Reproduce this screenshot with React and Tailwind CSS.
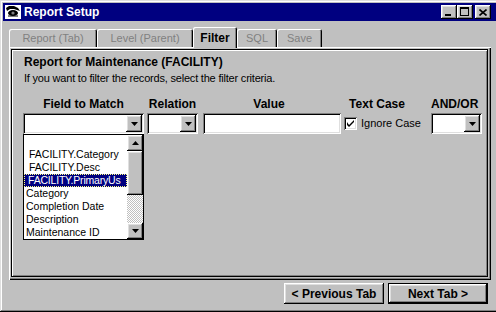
import React from 'react';

const font = { fontFamily: '"Liberation Sans", Arial, sans-serif' };

// win95 bevels
const raisedBtn = "shadow-[inset_-1px_-1px_0_#000,inset_1px_1px_0_#fff,inset_-2px_-2px_0_#808080,inset_2px_2px_0_#dfdfdf]";
const sunken = "shadow-[inset_1px_1px_0_#808080,inset_-1px_-1px_0_#fff,inset_2px_2px_0_#000,inset_-2px_-2px_0_#dfdfdf]";

function DownArrow() {
    return (
        <svg width="7" height="4" viewBox="0 0 7 4">
            <polygon points="0,0 7,0 3.5,4" fill="#000" />
        </svg>
    );
}

function UpArrow() {
    return (
        <svg width="7" height="4" viewBox="0 0 7 4">
            <polygon points="3.5,0 7,4 0,4" fill="#000" />
        </svg>
    );
}

function Combo({ width, children }) {
    return (
        <div className={`relative flex h-[21px] bg-white p-[2px] ${sunken}`} style={{ width }}>
            <div className="flex-1" />
            <div className={`flex h-[17px] w-[16px] items-center justify-center bg-[#c0c0c0] ${raisedBtn}`}>
                <DownArrow />
            </div>
            {children}
        </div>
    );
}

function Tab({ label, width, selected }) {
    if (selected) {
        return (
            <div
                className="relative z-10 -mb-px flex h-[21px] justify-center rounded-t-[2px] bg-[#c0c0c0] pt-[4px] text-[12px] font-bold leading-[14px] text-black shadow-[inset_1px_1px_0_#fff,inset_-1px_0_0_#000,inset_-2px_0_0_#808080]"
                style={{ width }}
            >
                {label}
            </div>
        );
    }
    return (
        <div
            className="flex h-[18px] items-center justify-center rounded-t-[2px] text-[11px] leading-[13px] text-[#808080] shadow-[inset_1px_1px_0_#fff,inset_-1px_0_0_#000,inset_-2px_0_0_#808080]"
            style={{ width }}
        >
            {label}
        </div>
    );
}

const listItems = [
    { text: '', indent: false },
    { text: 'FACILITY.Category', indent: true },
    { text: 'FACILITY.Desc', indent: true },
    { text: 'FACILITY.PrimaryUs', indent: true, selected: true },
    { text: 'Category' },
    { text: 'Completion Date' },
    { text: 'Description' },
    { text: 'Maintenance ID' },
];

export default function App() {
    return (
        <div className="h-[312px] w-[496px] overflow-hidden bg-[#c0c0c0]" style={font}>
            <div className="flex h-[312px] w-[499px] flex-col p-[3px] shadow-[inset_-1px_-1px_0_#000,inset_1px_1px_0_#dfdfdf,inset_-2px_-2px_0_#808080,inset_2px_2px_0_#fff]">
                {/* Title bar */}
                <div className="flex h-[18px] items-center bg-[#000080]">
                    <svg width="16" height="16" viewBox="0 0 16 16" className="ml-[2px]">
                        <rect x="0" y="1" width="16" height="14" fill="#fff" />
                        <path d="M1 4 L4 2 L9 2 L13 4 L15 7 L12 6 L9 5 L5 5 L2 7 Z" fill="#000" />
                        <ellipse cx="8" cy="9" rx="5" ry="3" fill="#000" />
                        <circle cx="8" cy="9" r="1.6" fill="#808080" />
                        <path d="M3 12 L13 12" stroke="#000" strokeWidth="1" />
                    </svg>
                    <span className="ml-[3px] text-[12px] font-bold leading-[14px] text-white">Report Setup</span>
                    <div className="flex-1" />
                    <div className={`relative h-[14px] w-[16px] bg-[#c0c0c0] ${raisedBtn}`}>
                        <div className="absolute left-[4px] top-[9px] h-[2px] w-[6px] bg-black" />
                    </div>
                    <div className={`relative h-[14px] w-[16px] bg-[#c0c0c0] ${raisedBtn}`}>
                        <div className="absolute left-[3px] top-[2px] h-[9px] w-[9px] border border-t-2 border-black" />
                    </div>
                    <div className={`ml-[2px] mr-[5px] flex h-[14px] w-[16px] items-center justify-center bg-[#c0c0c0] ${raisedBtn}`}>
                        <svg width="8" height="7" viewBox="0 0 8 7">
                            <path d="M0.5 0.5 L7.5 6.5 M7.5 0.5 L0.5 6.5" stroke="#000" strokeWidth="1.6" />
                        </svg>
                    </div>
                </div>

                {/* Tabs */}
                <div className="ml-[6px] mt-[6px] flex h-[20px] items-end">
                    <Tab label="Report (Tab)" width={88} />
                    <Tab label="Level (Parent)" width={96} />
                    <Tab label="Filter" width={44} selected />
                    <Tab label="SQL" width={40} />
                    <Tab label="Save" width={45} />
                </div>

                {/* Tab panel */}
                <div className="ml-[6px] h-[233px] w-[482px] pb-[3px] pl-[2px] pr-[3px] pt-[2px] shadow-[inset_1px_1px_0_#fff,inset_-1px_-1px_0_#000,inset_-2px_-2px_0_#808080]">
                    <div className="h-[228px] w-[477px] border border-black pl-[11px] pt-[5px] shadow-[inset_1px_1px_0_#fff,inset_-1px_-1px_0_#808080]">
                        <div className="pl-[1px] text-[12px] font-bold leading-[14px] text-black">
                            Report for Maintenance (FACILITY)
                        </div>
                        <div className="mt-[3px] pl-[1px] text-[11px] leading-[13px] tracking-[-0.2px] text-black">
                            If you want to filter the records, select the filter criteria.
                        </div>

                        {/* Column headers */}
                        <div className="mt-[12px] flex text-[12px] font-bold leading-[14px] text-black">
                            <div className="w-[121px] text-center">Field to Match</div>
                            <div className="ml-[3px] w-[51px] text-center">Relation</div>
                            <div className="ml-[5px] w-[138px] pr-[6px] text-center">Value</div>
                            <div className="ml-[3px] w-[87px]">
                                <div className="w-[66px] text-center">Text Case</div>
                            </div>
                            <div className="w-[51px] pr-[6px] text-center">AND/OR</div>
                        </div>

                        {/* Controls */}
                        <div className="mt-[2px] flex">
                            <Combo width={121}>
                                <div className="absolute left-0 top-[21px] z-20 flex h-[106px] w-[121px] border border-black bg-white">
                                    <div className="flex-1 overflow-hidden">
                                        {listItems.map((it, i) => (
                                            <div
                                                key={i}
                                                className={
                                                    it.selected
                                                        ? 'h-[13px] overflow-hidden whitespace-nowrap border border-dotted border-[#ffff80] bg-[#000080] pl-[3px] text-[10.5px] leading-[11px] tracking-[-0.2px] text-white'
                                                        : it.indent
                                                            ? 'h-[13px] overflow-hidden whitespace-nowrap pl-[5px] text-[10.5px] leading-[13px] text-black'
                                                            : 'h-[13px] overflow-hidden whitespace-nowrap pl-[2px] text-[10.5px] leading-[13px] text-black'
                                                }
                                            >
                                                {it.text}
                                            </div>
                                        ))}
                                    </div>
                                    <div className="flex w-[16px] flex-col">
                                        <div className={`flex h-[16px] items-center justify-center bg-[#c0c0c0] ${raisedBtn}`}>
                                            <UpArrow />
                                        </div>
                                        <div className={`h-[44px] bg-[#c0c0c0] ${raisedBtn}`} />
                                        <div className="h-[28px] bg-[repeating-conic-gradient(#ffffff_0_25%,#c0c0c0_0_50%)] bg-[length:2px_2px]" />
                                        <div className={`flex h-[16px] items-center justify-center bg-[#c0c0c0] ${raisedBtn}`}>
                                            <DownArrow />
                                        </div>
                                    </div>
                                </div>
                            </Combo>
                            <div className="ml-[3px]">
                                <Combo width={51} />
                            </div>
                            <div className={`ml-[5px] h-[21px] w-[138px] bg-white ${sunken}`} />
                            <div className="ml-[3px] flex w-[87px] items-center">
                                <div className={`flex h-[13px] w-[13px] items-center justify-center bg-white ${sunken}`}>
                                    <svg width="7" height="7" viewBox="0 0 7 7">
                                        <path d="M0 2 L0 5 L2 7 L7 2 L7 0 L2 5 Z" fill="#000" />
                                    </svg>
                                </div>
                                <span className="ml-[4px] text-[11px] leading-[13px] text-black">Ignore Case</span>
                            </div>
                            <Combo width={51} />
                        </div>
                    </div>
                </div>

                {/* Bottom buttons */}
                <div className="ml-[281px] mt-[3px] flex gap-[4px]">
                    <button className={`flex h-[21px] w-[100px] items-center justify-center bg-[#c0c0c0] text-[12px] font-bold leading-[14px] text-black ${raisedBtn}`}>
                        &lt; Previous Tab
                    </button>
                    <div className="h-[21px] w-[100px] border border-black">
                        <button className={`flex h-[19px] w-[98px] items-center justify-center bg-[#c0c0c0] text-[12px] font-bold leading-[14px] text-black ${raisedBtn}`}>
                            Next Tab &gt;
                        </button>
                    </div>
                </div>
            </div>
        </div>
    );
}
